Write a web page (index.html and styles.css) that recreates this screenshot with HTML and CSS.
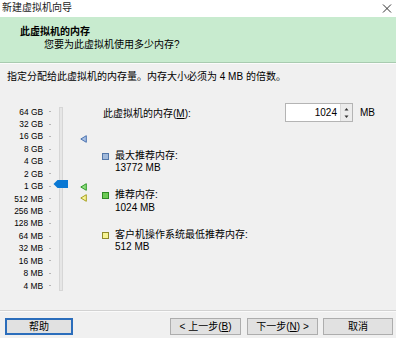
FILE: index.html
```html
<!DOCTYPE html>
<html lang="zh-CN">
<head>
<meta charset="utf-8">
<title>新建虚拟机向导</title>
<link rel="stylesheet" href="styles.css">
</head>
<body>
<div class="window">
  <div class="titlebar">
    <span class="title">新建虚拟机向导</span>
    <svg class="close" width="10" height="9" viewBox="0 0 10 9"><path d="M1 0.5 L9 8.5 M9 0.5 L1 8.5" stroke="#333" stroke-width="1" fill="none"/></svg>
  </div>
  <div class="header">
    <div class="h-title">此虚拟机的内存</div>
    <div class="h-sub">您要为此虚拟机使用多少内存?</div>
  </div>
  <div class="content">
    <p class="intro">指定分配给此虚拟机的内存量。内存大小必须为 4 MB 的倍数。</p>
    <div class="main">
      <div class="scale">
        <ul class="labels">
          <li><span>64 GB</span></li>
          <li><span>32 GB</span></li>
          <li><span>16 GB</span></li>
          <li><span>8 GB</span></li>
          <li><span>4 GB</span></li>
          <li><span>2 GB</span></li>
          <li><span>1 GB</span></li>
          <li><span>512 MB</span></li>
          <li><span>256 MB</span></li>
          <li><span>128 MB</span></li>
          <li><span>64 MB</span></li>
          <li><span>32 MB</span></li>
          <li><span>16 MB</span></li>
          <li><span>8 MB</span></li>
          <li><span>4 MB</span></li>
        </ul>
        <div class="track"></div>
        <svg class="thumb" width="15" height="8" viewBox="0 0 15 8"><path d="M0.5 4 L4.5 0 H15 V8 H4.5 Z" fill="#0a78d4"/></svg>
        <svg class="marker m-max" width="7" height="8" viewBox="0 0 7 8"><path d="M0.8 4 L6.3 0.7 V7.3 Z" fill="#a8c0e4" stroke="#4a72b0" stroke-width="1"/></svg>
        <svg class="marker m-rec" width="7" height="8" viewBox="0 0 7 8"><path d="M0.8 4 L6.3 0.7 V7.3 Z" fill="#8edc7c" stroke="#2f9a2a" stroke-width="1"/></svg>
        <svg class="marker m-min" width="7" height="8" viewBox="0 0 7 8"><path d="M0.8 4 L6.3 0.7 V7.3 Z" fill="#f8f49a" stroke="#a8a020" stroke-width="1"/></svg>
      </div>
      <div class="details">
        <div class="mem-row">
          <label class="mem-label">此虚拟机的内存(<u>M</u>):</label>
          <div class="spin">
            <span class="value">1024</span>
            <span class="arrows">
              <svg width="9" height="8" viewBox="0 0 9 8"><path d="M2.5 5.5 L4.5 3 L6.5 5.5 Z" fill="#333"/></svg>
              <svg width="9" height="8" viewBox="0 0 9 8"><path d="M2.5 2.5 L4.5 5 L6.5 2.5 Z" fill="#333"/></svg>
            </span>
          </div>
          <span class="unit">MB</span>
        </div>
        <div class="legend">
          <div class="item">
            <span class="sq sq-blue"></span>
            <div class="item-text"><div>最大推荐内存:</div><div>13772 MB</div></div>
          </div>
          <div class="item">
            <span class="sq sq-green"></span>
            <div class="item-text"><div>推荐内存:</div><div>1024 MB</div></div>
          </div>
          <div class="item">
            <span class="sq sq-yellow"></span>
            <div class="item-text"><div>客户机操作系统最低推荐内存:</div><div>512 MB</div></div>
          </div>
        </div>
      </div>
    </div>
  </div>
  <div class="footer">
    <button class="btn btn-help">帮助</button>
    <div class="spacer"></div>
    <button class="btn btn-back">&lt; 上一步(<u>B</u>)</button>
    <button class="btn btn-next">下一步(<u>N</u>) &gt;</button>
    <button class="btn btn-cancel">取消</button>
  </div>
</div>
</body>
</html>
```

FILE: styles.css
```css
* { box-sizing: border-box; }
html, body { margin: 0; padding: 0; }
body {
  width: 396px;
  height: 338px;
  overflow: hidden;
  background: #f0f0f0;
  font-family: "Liberation Sans", "Noto Sans CJK SC", sans-serif;
  font-size: 10px;
  color: #000;
}
.window {
  display: flex;
  flex-direction: column;
  height: 338px;
}
.titlebar {
  height: 17px;
  background: #fff;
  display: flex;
  align-items: center;
  justify-content: space-between;
  padding: 0 4px 1px 2px;
  line-height: 14px;
  color: #1a1a1a;
}
.close { margin-top: 1px; }
.header {
  height: 46px;
  background: #c8ebcf;
  border-bottom: 1px solid #a9cbb0;
  padding: 8px 0 0 20px;
  line-height: 13px;
}
.h-title { font-weight: 700; }
.h-sub { padding-left: 24px; }
.content {
  flex: 1;
  border-top: 1px solid #fbfbfb;
  padding: 6px 0 0 7px;
}
.intro {
  margin: 0;
  line-height: 14px;
}
.main {
  display: flex;
  margin: 18px 0 0 -7px;
}
.scale {
  position: relative;
  width: 100px;
  height: 196px;
  padding-top: 3.5px;
}
.labels {
  list-style: none;
  margin: 0;
  padding: 0;
}
.labels li {
  display: flex;
  align-items: center;
  height: 12.45px;
  font-size: 8.4px;
  line-height: 12.45px;
}
.labels li span {
  width: 43px;
  text-align: right;
}
.labels li::after {
  content: "";
  width: 2px;
  height: 1px;
  margin-left: 6px;
  background: #b5b5b5;
}
.track {
  position: absolute;
  left: 59px;
  top: 5px;
  width: 4px;
  height: 184px;
  background: #e6e6e6;
  border: 1px solid #d6d6d6;
}
.thumb {
  position: absolute;
  left: 53px;
  top: 78px;
}
.marker {
  position: absolute;
  left: 80px;
}
.m-max { top: 33px; }
.m-rec { top: 80.5px; }
.m-min { top: 92px; }
.details {
  flex: 1;
}
.mem-row {
  display: flex;
  align-items: center;
  height: 19px;
  margin-top: 1px;
}
.mem-label {
  width: 182px;
  margin-left: 3px;
}
.spin {
  display: flex;
  width: 68px;
  height: 19px;
  background: #fff;
  border: 1px solid #b4b4b4;
}
.value {
  flex: 1;
  text-align: right;
  padding-right: 3px;
  line-height: 17px;
}
.arrows {
  display: flex;
  flex-direction: column;
  width: 12px;
  background: #ececec;
  border-left: 1px solid #d9d9d9;
  align-items: center;
  justify-content: center;
}
.unit {
  margin-left: 7px;
}
.legend {
  display: flex;
  flex-direction: column;
  gap: 14.7px;
  margin-top: 28px;
}
.item {
  display: flex;
  line-height: 12.3px;
}
.sq {
  width: 7px;
  height: 7px;
  margin: 3px 0 0 2px;
  border: 1px solid;
}
.sq-blue { background: #a2badb; border-color: #5478aa; }
.sq-green { background: #6ccb54; border-color: #2f8a24; }
.sq-yellow { background: #f6f392; border-color: #8f8a2a; }
.item-text { margin-left: 6px; }
.footer {
  height: 28px;
  border-top: 1px solid #d2d2d2;
  box-shadow: inset 0 1px 0 #fafafa;
  display: flex;
  align-items: flex-start;
  padding: 7px 3px 0 5px;
}
.spacer { flex: 1; }
.btn {
  height: 17px;
  padding: 0;
  font: inherit;
  line-height: 15px;
  color: #000;
  background: #e1e1e1;
  border: 1px solid #adadad;
  border-radius: 0;
}
.btn-help {
  width: 68px;
  border: 2px solid #2b6dbb;
  line-height: 13px;
}
.btn-back { width: 71px; }
.btn-next { width: 71px; margin-left: 6px; }
.btn-cancel { width: 70px; margin-left: 5px; }
```
